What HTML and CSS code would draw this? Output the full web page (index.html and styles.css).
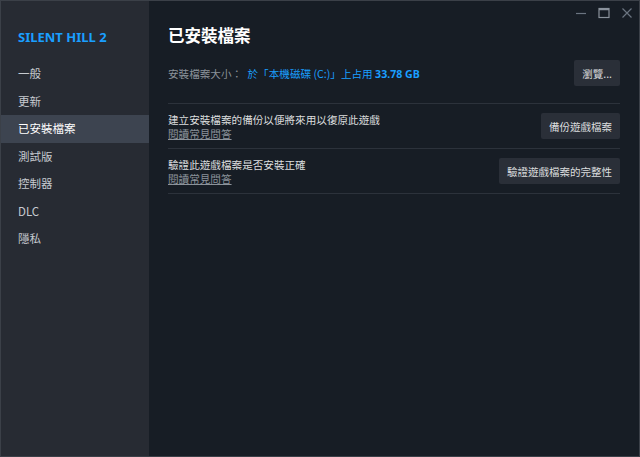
FILE: index.html
```html
<!DOCTYPE html>
<html lang="zh-Hant">
<head>
  <meta charset="UTF-8" />
  <title>SILENT HILL 2 - 內容</title>
  <link rel="stylesheet" href="styles.css">
</head>
<body>
  <div class="window">
    <div class="sidebar">
      <div class="game-title">SILENT HILL 2</div>
      <div class="nav">
        <div class="nav-item">一般</div>
        <div class="nav-item">更新</div>
        <div class="nav-item active">已安裝檔案</div>
        <div class="nav-item">測試版</div>
        <div class="nav-item">控制器</div>
        <div class="nav-item">DLC</div>
        <div class="nav-item">隱私</div>
      </div>
    </div>

    <div class="main">
      <div class="win-controls">
        <svg width="12" height="12" viewBox="0 0 12 12"><path d="M1 6.5h10" stroke="#6b7480" stroke-width="1.2"/></svg>
        <svg width="12" height="12" viewBox="0 0 12 12"><rect x="1" y="1.5" width="10" height="9" fill="none" stroke="#8a929c" stroke-width="1.2"/><path d="M1 2.5h10" stroke="#8a929c" stroke-width="1.5"/></svg>
        <svg width="12" height="12" viewBox="0 0 12 12"><path d="M1.5 1.5l9 9M10.5 1.5l-9 9" stroke="#6b7480" stroke-width="1.2"/></svg>
      </div>
      <h1 class="heading">已安裝檔案</h1>

      <div class="row first">
        <div class="size-line">
          <span class="label">安裝檔案大小：</span>
          <span class="value">於「本機磁碟 (C:)」上占用 <b>33.78 GB</b></span>
        </div>
        <button class="btn">瀏覽...</button>
      </div>

      <div class="row">
        <div>
          <div class="desc">建立安裝檔案的備份以便將來用以復原此遊戲</div>
          <a class="faq">閱讀常見問答</a>
        </div>
        <button class="btn">備份遊戲檔案</button>
      </div>

      <div class="row">
        <div>
          <div class="desc">驗證此遊戲檔案是否安裝正確</div>
          <a class="faq">閱讀常見問答</a>
        </div>
        <button class="btn">驗證遊戲檔案的完整性</button>
      </div>
    </div>
  </div>
</body>
</html>
```

FILE: styles.css
```css
body {
  margin: 0;
  background: #171d25;
  font-family: "Noto Sans CJK TC", "Noto Sans", sans-serif;
  color: #dcdedf;
}
.window {
  width: 640px;
  height: 457px;
  box-sizing: border-box;
  border: 1px solid #3b4048;
  display: flex;
  background: #171d25;
  overflow: hidden;
}
.sidebar {
  width: 148px;
  background: #272b33;
  flex-shrink: 0;
}
.game-title {
  color: #1a9fff;
  font-family: "Noto Sans", sans-serif;
  font-weight: bold;
  font-size: 13px;
  padding: 27px 0 0 17px;
  height: 32px;
  line-height: 18px;
}
.nav-item {
  height: 27.5px;
  line-height: 27.5px;
  padding-left: 17px;
  font-size: 11.5px;
  color: #c6cad0;
}
.nav-item.active {
  background: #3d4450;
  color: #ffffff;
}
.main {
  flex-grow: 1;
  padding: 0 19px;
  position: relative;
}
.win-controls {
  position: absolute;
  top: 6px;
  right: 6px;
  display: flex;
  gap: 11px;
}
.heading {
  margin: 22px 0 0 0;
  font-size: 16.5px;
  line-height: 24px;
  font-weight: bold;
  color: #ffffff;
}
.row {
  display: flex;
  justify-content: space-between;
  align-items: center;
  border-bottom: 1px solid #2c323b;
  padding: 8.5px 0;
  font-size: 10.6px;
}
.row.first {
  padding: 13px 0 17px 0;
}
.label {
  color: #8b929a;
}
.value {
  color: #1a9fff;
  margin-left: 3px;
}
.value b {
  font-family: "Noto Sans", sans-serif;
  font-weight: bold;
}
.desc {
  color: #dcdedf;
  line-height: 14px;
}
.faq {
  display: block;
  color: #8b929a;
  text-decoration: underline;
  line-height: 13px;
}
.btn {
  background: #2a2f38;
  color: #dcdedf;
  border: none;
  border-radius: 2px;
  height: 26px;
  padding: 0 8px;
  font-family: inherit;
  font-size: 10.5px;
}
```
